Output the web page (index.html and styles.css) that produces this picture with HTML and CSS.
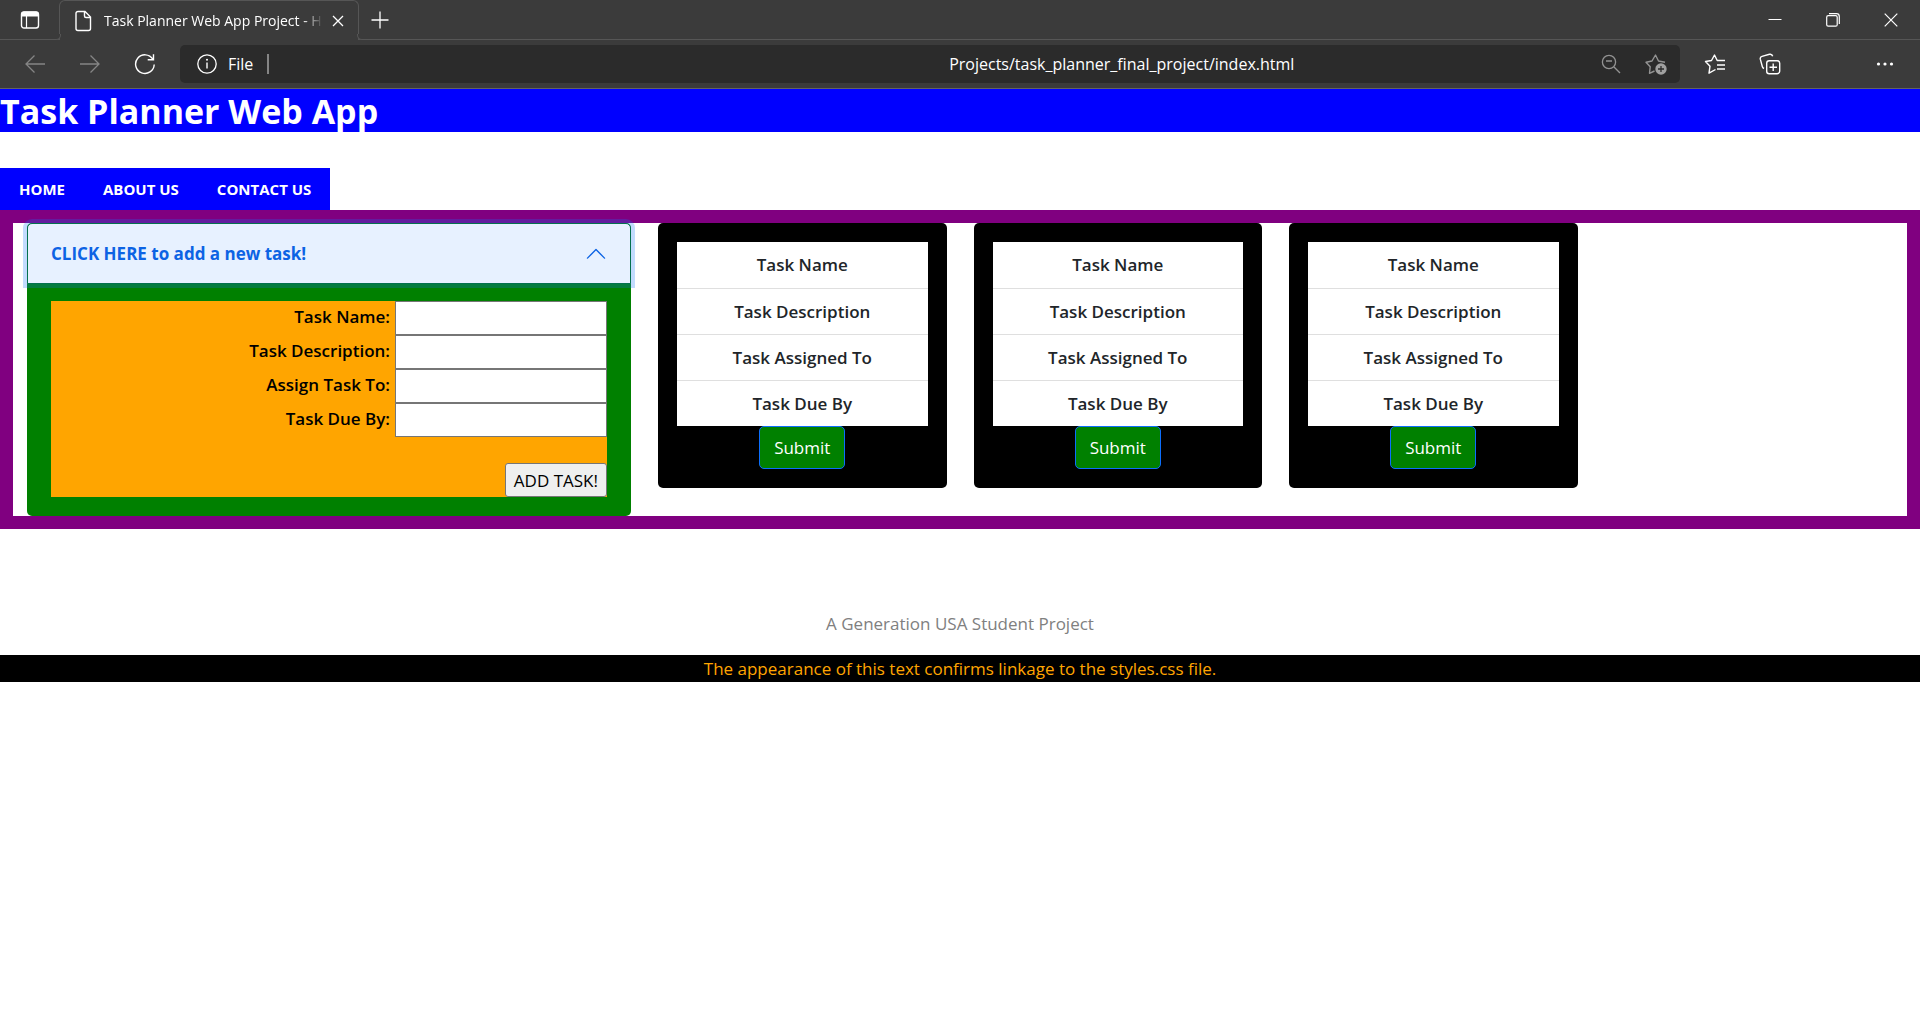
FILE: index.html
```html
<!DOCTYPE html>
<html lang="en">
<head>
<meta charset="utf-8">
<title>Task Planner Web App Project</title>
<link rel="stylesheet" href="styles.css">
</head>
<body>
<div class="browser">
  <div class="tabbar">
    <button class="icon-btn tab-menu" aria-label="Tab actions">
      <svg width="20" height="20" viewBox="0 0 20 20"><rect x="1.5" y="2" width="17" height="16" rx="2.5" fill="none" stroke="#fff" stroke-width="1.4"/><path d="M1.5 6.5V4a2.500 2.500 0 0 1 2.500-2.500h12A2.500 2.500 0 0 1 18.500 4v2.500z" fill="#fff"/><path d="M6.500 6v12" stroke="#fff" stroke-width="1.2"/></svg>
    </button>
    <div class="tab">
      <svg width="18" height="22" viewBox="0 0 18 22"><path d="M4 1.500h7l5.500 5.500v11.500a2 2 0 0 1-2 2H4a2 2 0 0 1-2-2v-15a2 2 0 0 1 2-2zM10.500 1.500v4.500a1.500 1.500 0 0 0 1.500 1.500h4.500" fill="none" stroke="#fff" stroke-width="1.4"/></svg>
      <span class="tab-title">Task Planner Web App Project - H</span>
      <button class="icon-btn tab-close" aria-label="Close tab">
        <svg width="12" height="12" viewBox="0 0 12 12"><path d="M1 1l10 10M11 1L1 11" stroke="#fff" stroke-width="1.3"/></svg>
      </button>
    </div>
    <button class="icon-btn new-tab" aria-label="New tab">
      <svg width="18" height="18" viewBox="0 0 18 18"><path d="M9 .5v17M.5 9h17" stroke="#fff" stroke-width="1.3"/></svg>
    </button>
    <div class="window-controls">
      <button class="icon-btn" aria-label="Minimize"><svg width="14" height="14" viewBox="0 0 14 14"><path d="M.5 6.500h13" stroke="#fff"/></svg></button>
      <button class="icon-btn" aria-label="Restore"><svg width="14" height="14" viewBox="0 0 14 14"><rect x=".7" y="2.700" width="10.500" height="10.500" rx="1.500" fill="none" stroke="#fff" stroke-width="1.200"/><path d="M3 .7h7.500a2.800 2.800 0 0 1 2.800 2.800V11" fill="none" stroke="#fff" stroke-width="1.200"/></svg></button>
      <button class="icon-btn" aria-label="Close"><svg width="14" height="14" viewBox="0 0 14 14"><path d="M.7.7l12.600 12.600M13.300.7L.7 13.300" stroke="#fff" stroke-width="1.200"/></svg></button>
    </div>
  </div>
  <div class="toolbar">
    <div class="nav-buttons">
      <button class="icon-btn" aria-label="Back"><svg width="20" height="20" viewBox="0 0 20 20"><path d="M20 10H1M9.500 1.500L1 10l8.500 8.500" fill="none" stroke="#858585" stroke-width="1.300"/></svg></button>
      <button class="icon-btn" aria-label="Forward"><svg width="20" height="20" viewBox="0 0 20 20"><path d="M0 10h19M10.500 1.500L19 10l-8.500 8.500" fill="none" stroke="#858585" stroke-width="1.300"/></svg></button>
      <button class="icon-btn" aria-label="Refresh"><svg width="22" height="22" viewBox="0 0 22 22"><path d="M20.200 11.500A9.300 9.300 0 1 1 18.800 6.200M19.500 1.200v5.600h-5.800" fill="none" stroke="#fff" stroke-width="1.400"/></svg></button>
    </div>
    <div class="address">
      <svg width="20" height="20" viewBox="0 0 20 20"><circle cx="10" cy="10" r="9.200" fill="none" stroke="#fff" stroke-width="1.300"/><path d="M10 8.500v6" stroke="#fff" stroke-width="1.400"/><circle cx="10" cy="5.800" r="1" fill="#fff"/></svg>
      <span class="scheme">File</span>
      <input class="url" type="text" aria-label="Address" value="Projects/task_planner_final_project/index.html">
      <button class="icon-btn" aria-label="Zoom"><svg width="20" height="20" viewBox="0 0 20 20"><circle cx="8" cy="8" r="6.600" fill="none" stroke="#939393" stroke-width="1.300"/><path d="M5 7h6M13 13l6 6" stroke="#939393" stroke-width="1.400"/></svg></button>
      <button class="icon-btn" aria-label="Add to favorites"><svg width="22" height="22" viewBox="0 0 22 22"><path d="M9.500 18l-5 2.300.7-6.500L1 9.200l6-1.200 3.500-6 3 6 6.500 1.200" fill="none" stroke="#939393" stroke-width="1.400" stroke-linejoin="round"/><circle cx="16" cy="16" r="5.700" fill="#a0a0a0"/><path d="M16 13v6M13 16h6" stroke="#2b2b2b" stroke-width="1.300"/></svg></button>
    </div>
    <div class="tools">
      <button class="icon-btn" aria-label="Favorites"><svg width="22" height="22" viewBox="0 0 22 22"><path d="M11.500 16.500l-6.500 3.700 1-7-4.500-4.700 6-1L10.500 2l2.700 5.500H21M13 12h8M13 16h8" fill="none" stroke="#fff" stroke-width="1.400" stroke-linejoin="round"/></svg></button>
      <button class="icon-btn" aria-label="Collections"><svg width="22" height="22" viewBox="0 0 22 22"><path d="M5 15.500c-1-.5-1.500-1.200-1.700-2L1.300 6.200A2.500 2.500 0 0 1 3 3.300L10.500 1.300c1.700-.4 2.800.5 3.200 2" fill="none" stroke="#fff" stroke-width="1.400"/><rect x="7.700" y="7.700" width="13" height="13" rx="2.500" fill="none" stroke="#fff" stroke-width="1.400"/><path d="M14.200 10.500v7.500M10.500 14.200h7.500" stroke="#fff" stroke-width="1.400"/></svg></button>
      <button class="icon-btn more" aria-label="More"><svg width="18" height="18" viewBox="0 0 18 18" fill="#fff"><circle cx="2.500" cy="9" r="1.600"/><circle cx="9" cy="9" r="1.600"/><circle cx="15.500" cy="9" r="1.600"/></svg></button>
    </div>
  </div>
</div>

<header class="banner"><h1>Task Planner Web App</h1></header>
<nav class="menu">
  <a href="#home">HOME</a>
  <a href="#about">ABOUT US</a>
  <a href="#contact">CONTACT US</a>
</nav>

<main class="board">
  <section class="accordion">
    <button class="accordion-toggle" aria-expanded="true" aria-controls="task-form">
      <span>CLICK HERE to add a new task!</span>
      <svg width="22" height="22" viewBox="0 0 16 16"><path d="M1.800 11L8 4.800l6.200 6.200" fill="none" stroke="#0c63e4" stroke-linecap="round" stroke-linejoin="round"/></svg>
    </button>
    <form class="task-form" id="task-form">
      <div class="field"><label for="name">Task Name:</label><input id="name" type="text"></div>
      <div class="field"><label for="description">Task Description:</label><input id="description" type="text"></div>
      <div class="field"><label for="assignee">Assign Task To:</label><input id="assignee" type="text"></div>
      <div class="field"><label for="due">Task Due By:</label><input id="due" type="text"></div>
      <button class="add" type="button">ADD TASK!</button>
    </form>
  </section>
  <article class="card">
    <ul><li>Task Name</li><li>Task Description</li><li>Task Assigned To</li><li>Task Due By</li></ul>
    <button class="submit" type="button">Submit</button>
  </article>
  <article class="card">
    <ul><li>Task Name</li><li>Task Description</li><li>Task Assigned To</li><li>Task Due By</li></ul>
    <button class="submit" type="button">Submit</button>
  </article>
  <article class="card">
    <ul><li>Task Name</li><li>Task Description</li><li>Task Assigned To</li><li>Task Due By</li></ul>
    <button class="submit" type="button">Submit</button>
  </article>
</main>

<footer class="footer">
  <p class="credit">A Generation USA Student Project</p>
  <p class="linkage">The appearance of this text confirms linkage to the styles.css file.</p>
</footer>
</body>
</html>
```

FILE: styles.css
```css
* { box-sizing: border-box; }

body {
  margin: 0;
  background: #fff;
  color: #212529;
  font: 17px/27px "Open Sans", "Noto Sans", sans-serif;
}

button, input { font: inherit; }

svg { display: block; flex: none; }

/* Browser frame */
.browser {
  background: #3b3b3b;
  color: #fff;
  border-bottom: 1px solid #636363;
}

.icon-btn {
  display: flex;
  align-items: center;
  justify-content: center;
  flex: none;
  padding: 0;
  border: 0;
  background: none;
}

.tabbar {
  display: flex;
  height: 40px;
  border-bottom: 1px solid #565656;
}

.tab-menu { width: 59px; }

.tab {
  position: relative;
  display: flex;
  align-items: center;
  width: 300px;
  height: 40px;
  padding: 0 14px;
  background: #3b3b3b;
  border: 1px solid #565656;
  border-bottom: 0;
  border-radius: 6px 6px 0 0;
  font-size: 14px;
}

/* Flared feet that join the tab to the line below */
.tab::before,
.tab::after {
  content: "";
  position: absolute;
  bottom: 0;
  width: 5px;
  height: 5px;
  background: #3b3b3b;
  border-bottom: 1px solid #565656;
}
.tab::before { left: -5px; border-right: 1px solid #565656; border-bottom-right-radius: 5px; }
.tab::after { right: -5px; border-left: 1px solid #565656; border-bottom-left-radius: 5px; }

.tab-title {
  flex: 1;
  margin: 0 2px 0 12px;
  white-space: nowrap;
  -webkit-mask-image: linear-gradient(to right, #000 88%, transparent 97%);
  mask-image: linear-gradient(to right, #000 88%, transparent 97%);
}

.new-tab { width: 42px; }

.window-controls {
  display: flex;
  margin-left: auto;
}
.window-controls .icon-btn { width: 58px; }

.toolbar {
  display: flex;
  align-items: center;
  height: 48px;
}

.nav-buttons {
  display: flex;
  width: 180px;
  padding-left: 7px;
}
.nav-buttons .icon-btn { width: 55px; }

.address {
  display: flex;
  flex: 1;
  align-items: center;
  height: 38px;
  padding: 0 13px 0 17px;
  background: #2b2b2b;
  border-radius: 5px;
  font-size: 16px;
}
.scheme {
  width: 41px;
  margin-left: 11px;
  border-right: 2px solid #858585;
  line-height: 20px;
}
.url {
  flex: 1;
  min-width: 0;
  margin-left: 4px;
  padding: 0 0 0 46%;
  border: 0;
  background: none;
  color: #fff;
}
.address .icon-btn { margin-left: 24px; }

.tools {
  display: flex;
  width: 240px;
  padding-left: 7px;
}
.tools .icon-btn { width: 55px; }
.tools .more { margin: 0 8px 0 auto; }

/* Page */
.banner {
  padding-top: 2px;
  background: blue;
  color: #fff;
}
.banner h1 {
  margin: 0;
  font-size: 34px;
  line-height: 41px;
}

.menu {
  display: flex;
  width: fit-content;
  margin-top: 36px;
  background: blue;
}
.menu a {
  padding: 0 19px;
  color: #fff;
  font-size: 15px;
  font-weight: 700;
  line-height: 42px;
  text-decoration: none;
}

.board {
  display: grid;
  grid-template-columns: repeat(6, 1fr);
  align-items: start;
  gap: 27px;
  padding: 0 14px;
  border: 13px solid purple;
}

.accordion {
  grid-column: span 2;
  padding-bottom: 19px;
  background: green;
  border-radius: 5px;
}
.accordion-toggle {
  display: flex;
  align-items: center;
  justify-content: space-between;
  width: 100%;
  height: 61px;
  padding: 0 23px;
  border: 1px solid #04714e;
  border-radius: 5px 5px 0 0;
  background: #e7f1ff;
  box-shadow: 0 0 0 4px rgba(13, 110, 253, .25);
  color: #0c63e4;
  font-weight: 700;
}

.task-form {
  display: flex;
  flex-direction: column;
  margin: 17px 24px 0;
  background: orange;
  color: #000;
}

.field {
  display: flex;
  justify-content: flex-end;
  gap: 5px;
  font-weight: 600;
  line-height: 32px;
}
.field input {
  width: 212px;
  height: 34px;
  border: 1px solid #767676;
}

.add {
  align-self: flex-end;
  height: 34px;
  margin-top: 26px;
  padding: 0 8px;
  border: 1px solid #767676;
  border-radius: 3px;
  background: #efefef;
  color: #000;
}

.card {
  display: flex;
  flex-direction: column;
  align-items: center;
  padding: 19px;
  background: #000;
  border-radius: 5px;
  text-align: center;
}
.card ul {
  width: 100%;
  margin: 0;
  padding: 0;
  list-style: none;
  background: #fff;
}
.card li {
  padding: 9px;
  font-weight: 600;
  line-height: 28px;
}
.card li + li { border-top: 1px solid #dfdfdf; line-height: 27px; }

.submit {
  height: 43px;
  padding: 0 14px;
  border: 1px solid #0d6efd;
  border-radius: 5px;
  background: green;
  color: #fff;
}

.footer {
  margin-top: 81px;
  text-align: center;
}
.credit {
  margin: 0 0 18px;
  color: gray;
}
.linkage {
  margin: 0;
  background: #000;
  color: orange;
}
```
